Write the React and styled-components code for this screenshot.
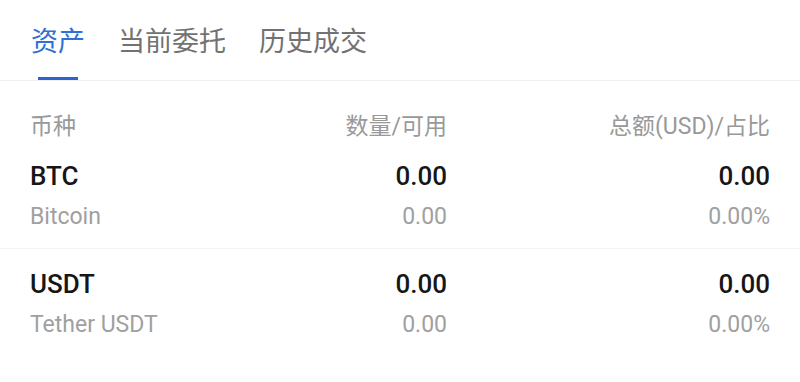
import React from "react";
import styled, { createGlobalStyle } from "styled-components";

const Global = createGlobalStyle`
  html, body { margin: 0; padding: 0; background: #fff; }
  body { font-family: Roboto, "Noto Sans CJK SC", sans-serif; -webkit-font-smoothing: antialiased; }
`;

const Page = styled.div`
  width: 800px;
  background: #fff;
`;

const TabBar = styled.div`
  display: flex;
  gap: 33px;
  padding: 0 31px;
  border-bottom: 1px solid #f0f0f0;
`;

const Tab = styled.div`
  position: relative;
  padding-top: 26px;
  height: 54px;
  line-height: 28px;
  font-size: 27px;
  font-family: "Noto Sans CJK SC", sans-serif;
  color: ${(p) => (p.$active ? "#2f6fd6" : "#727272")};
  &::after {
    content: "";
    display: ${(p) => (p.$active ? "block" : "none")};
    position: absolute;
    left: 50%;
    bottom: 0;
    width: 40px;
    height: 3px;
    margin-left: -20px;
    background: #2f62d0;
  }
`;

const Grid = styled.div`
  display: grid;
  grid-template-columns: 1fr 200px 323px;
  padding: 0 30px;
`;

const Header = styled(Grid)`
  padding-top: 32px;
  height: 28px;
  line-height: 28px;
  font-size: 23px;
  color: #999;
  font-family: Roboto, "Noto Sans CJK SC", sans-serif;
`;

const Row = styled(Grid)`
  padding-top: 20px;
  padding-bottom: 17px;
  border-bottom: ${(p) => (p.$last ? "none" : "1px solid #f3f3f3")};
`;

const Cell = styled.div`
  display: flex;
  flex-direction: column;
  align-items: ${(p) => (p.$right ? "flex-end" : "flex-start")};
`;

const HeadCell = styled.div`
  text-align: ${(p) => (p.$right ? "right" : "left")};
`;

const Title = styled.div`
  font-size: 26px;
  font-weight: 500;
  line-height: 30px;
  color: #161616;
`;

const Sub = styled.div`
  margin-top: 12px;
  font-size: 23px;
  line-height: 28px;
  color: #a0a0a0;
`;

const assets = [
  { sym: "BTC", name: "Bitcoin", qty: "0.00", avail: "0.00", total: "0.00", pct: "0.00%" },
  { sym: "USDT", name: "Tether USDT", qty: "0.00", avail: "0.00", total: "0.00", pct: "0.00%" },
];

export default function App() {
  return (
    <Page>
      <Global />
      <TabBar>
        <Tab $active>资产</Tab>
        <Tab>当前委托</Tab>
        <Tab>历史成交</Tab>
      </TabBar>
      <Header>
        <HeadCell>币种</HeadCell>
        <HeadCell $right>数量/可用</HeadCell>
        <HeadCell $right>总额(USD)/占比</HeadCell>
      </Header>
      {assets.map((a, i) => (
        <Row key={a.sym} $last={i === assets.length - 1}>
          <Cell>
            <Title>{a.sym}</Title>
            <Sub>{a.name}</Sub>
          </Cell>
          <Cell $right>
            <Title>{a.qty}</Title>
            <Sub>{a.avail}</Sub>
          </Cell>
          <Cell $right>
            <Title>{a.total}</Title>
            <Sub>{a.pct}</Sub>
          </Cell>
        </Row>
      ))}
    </Page>
  );
}
